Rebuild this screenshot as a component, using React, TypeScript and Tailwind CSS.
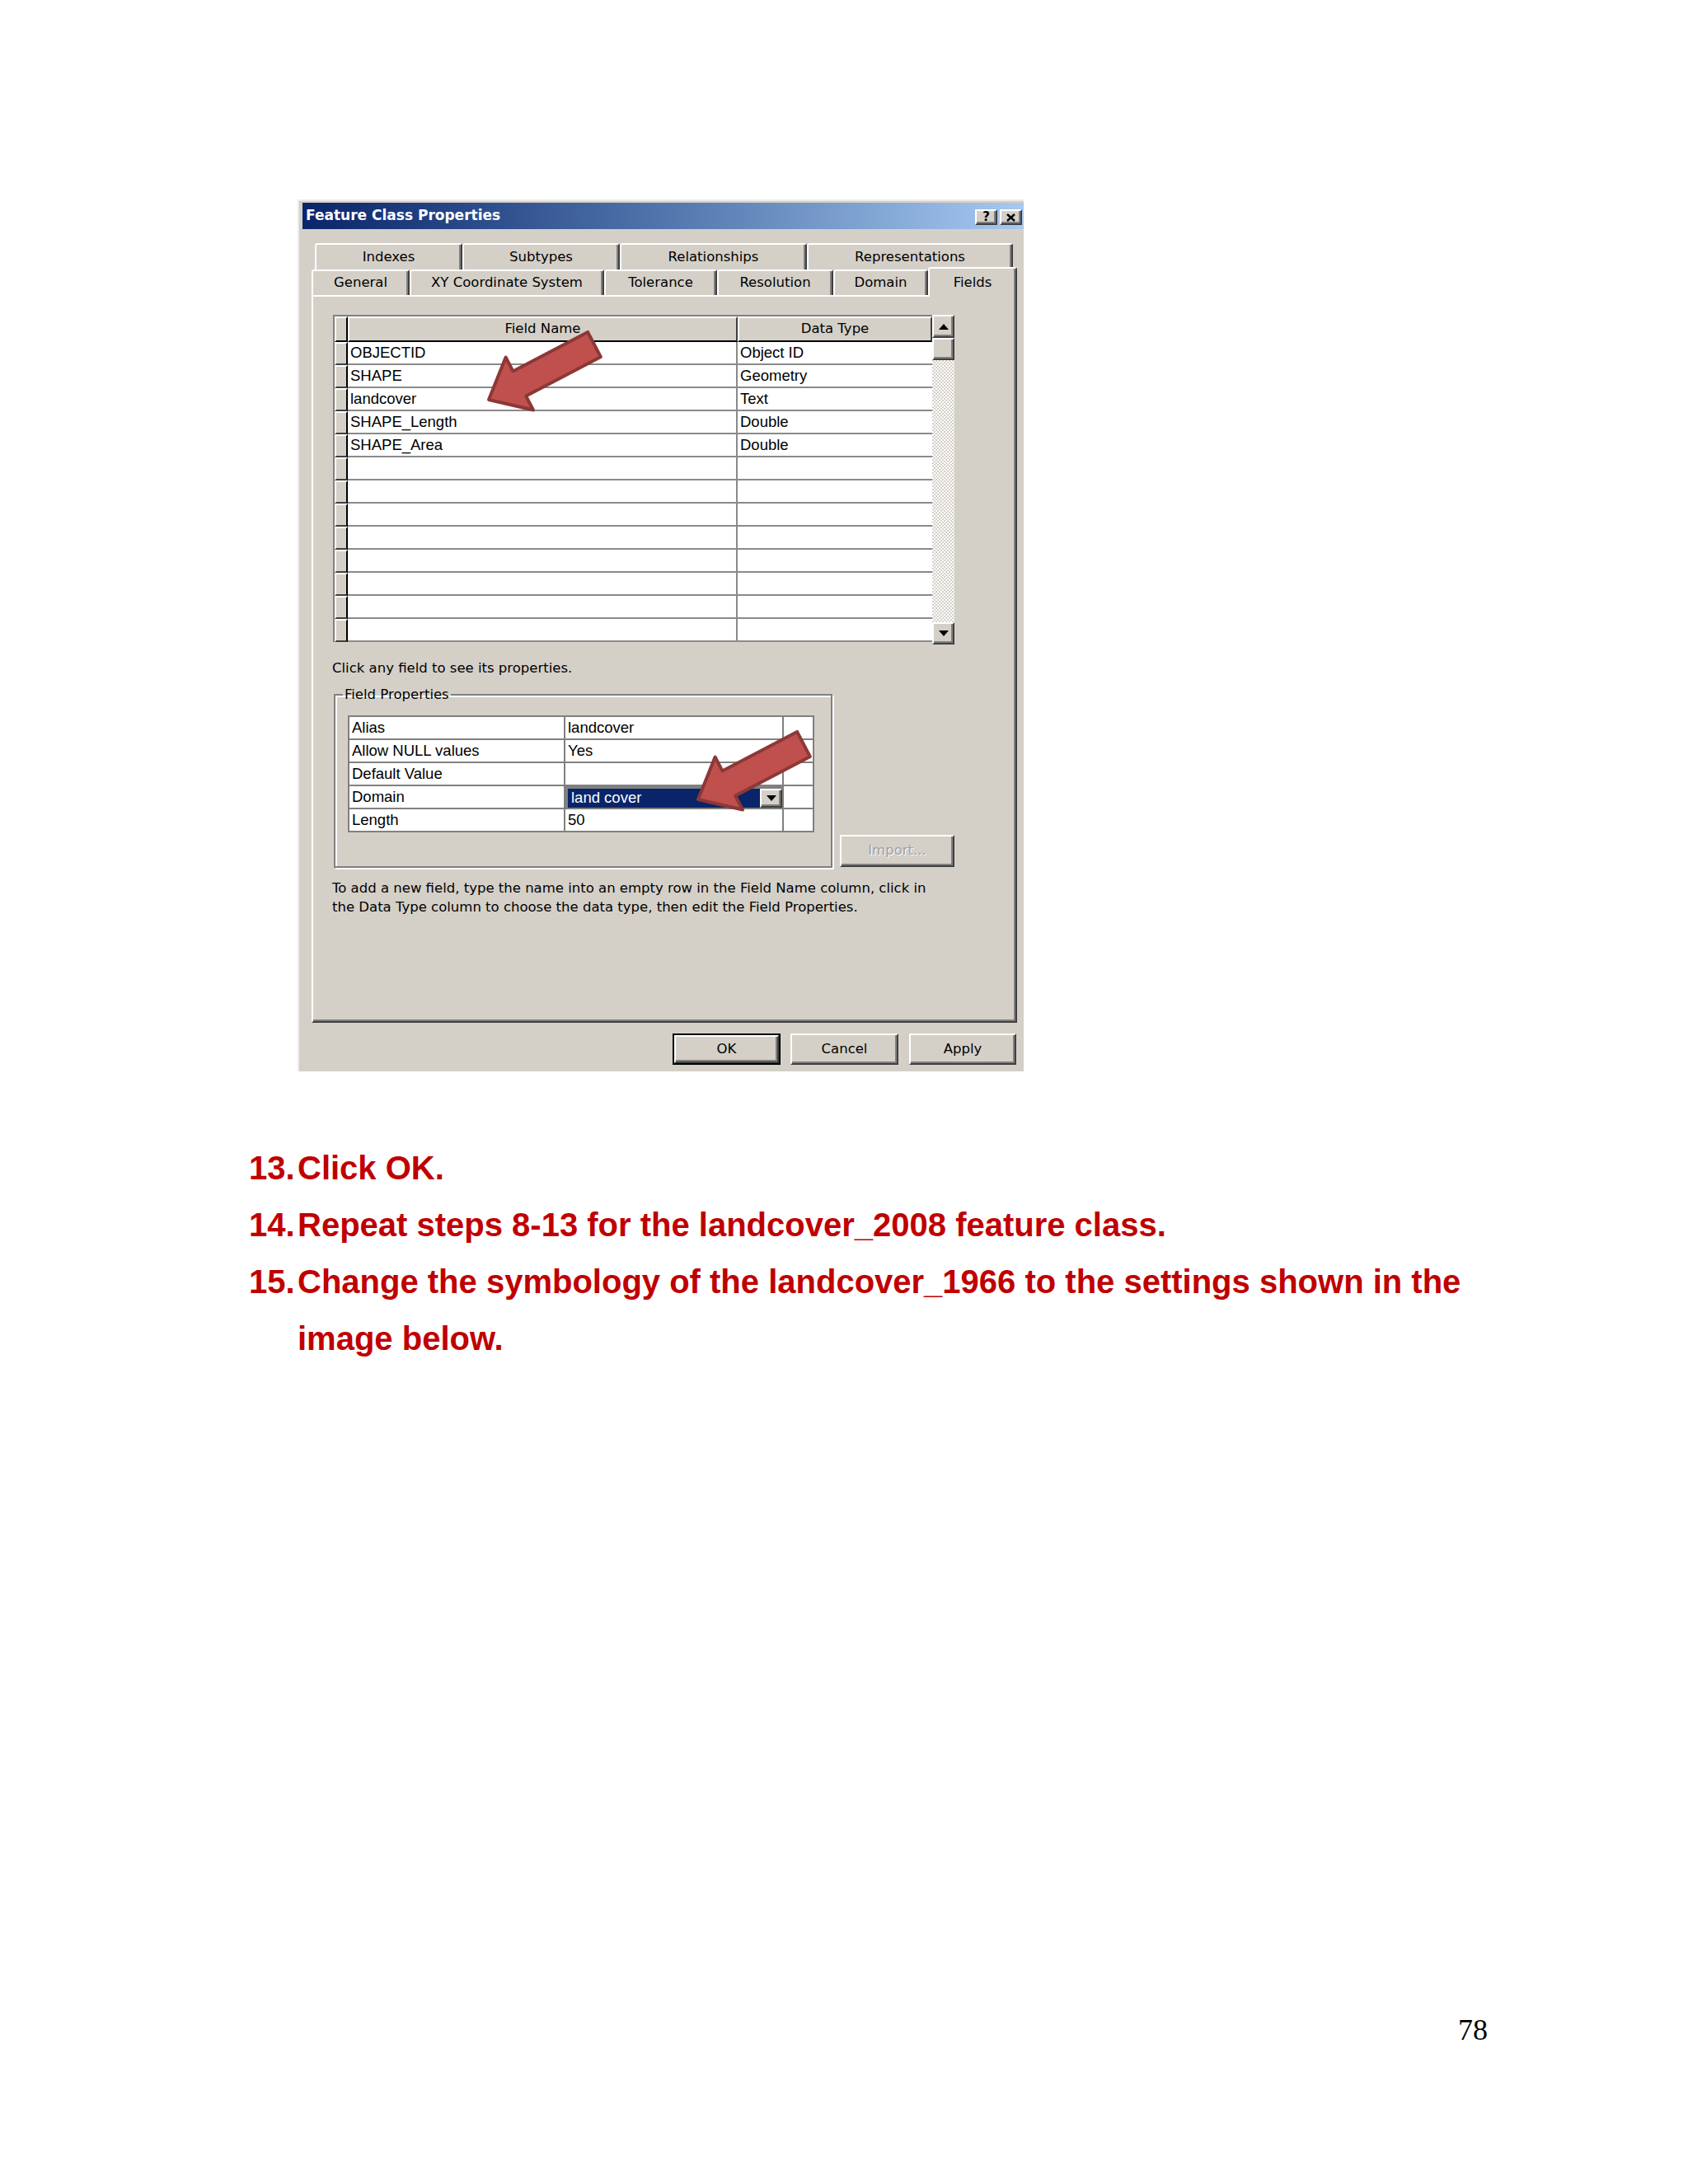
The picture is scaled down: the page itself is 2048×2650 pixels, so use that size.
import React from 'react';

const tahoma = "font-['DejaVu_Sans',sans-serif]";
const msSans = "font-['Liberation_Sans',Arial,sans-serif]";

const raised =
  'bg-[#d4d0c8] border-2 border-t-white border-l-white border-r-[#404040] border-b-[#404040] shadow-[inset_-2px_-2px_0_#808080]';

const fieldRows: [string, string][] = [
  ['OBJECTID', 'Object ID'],
  ['SHAPE', 'Geometry'],
  ['landcover', 'Text'],
  ['SHAPE_Length', 'Double'],
  ['SHAPE_Area', 'Double'],
  ['', ''],
  ['', ''],
  ['', ''],
  ['', ''],
  ['', ''],
  ['', ''],
  ['', ''],
  ['', ''],
];

const propRows = [
  ['Alias', 'landcover'],
  ['Allow NULL values', 'Yes'],
  ['Default Value', ''],
  ['Domain', 'land cover'],
  ['Length', '50'],
];

const Tri = ({ up }: { up?: boolean }) => (
  <svg width="12" height="7" viewBox="0 0 12 7">
    <polygon points={up ? '6,0 12,7 0,7' : '0,0 12,0 6,7'} fill="#000" />
  </svg>
);

const Tab = ({ label, w }: { label: string; w: number }) => (
  <div
    style={{ width: w }}
    className="h-full flex items-center justify-center rounded-t-[3px] bg-[#d4d0c8] border-l-2 border-t-2 border-white border-r-2 border-r-[#404040] shadow-[inset_-2px_0_0_#808080] text-[16.5px] text-black"
  >
    {label}
  </div>
);

const FieldGrid = () => (
  <div className="flex h-[400px] items-start">
    <div className="w-[727px] border-l-2 border-t-2 border-[#808080]">
      <div className="flex h-[31px]">
        <div className="w-[16px] bg-[#d4d0c8] border-l-2 border-t-2 border-white border-r-2 border-r-black border-b-2 border-b-black" />
        <div className="w-[473px] bg-[#d4d0c8] border-l-2 border-t-2 border-white border-r-2 border-r-[#404040] border-b-2 border-b-black flex items-center justify-center text-[16.5px]">
          Field Name
        </div>
        <div className="w-[236px] bg-[#d4d0c8] border-l-2 border-t-2 border-white border-r-2 border-r-[#404040] border-b-2 border-b-black flex items-center justify-center text-[16.5px]">
          Data Type
        </div>
      </div>
      {fieldRows.map(([name, type], i) => (
        <div key={i} className={`flex h-[28px] ${msSans} text-[18.5px]`}>
          <div className="w-[16px] bg-[#d4d0c8] border-l-2 border-t-2 border-white border-r-2 border-r-black border-b-2 border-b-[#404040]" />
          <div className="w-[473px] bg-white border-r-2 border-b-2 border-[#8a8a8a] pl-[3px] flex items-center leading-none">
            {name}
          </div>
          <div className="w-[236px] bg-white border-b-2 border-[#8a8a8a] pl-[3px] flex items-center leading-none">
            {type}
          </div>
        </div>
      ))}
    </div>
    <div className="w-[27px] h-[400px] flex flex-col">
      <div className={`${raised} h-[28px] flex items-center justify-center`}>
        <Tri up />
      </div>
      <div className={`${raised} h-[27px]`} />
      <div className="flex-1 bg-[image:repeating-conic-gradient(#ffffff_0%_25%,#d4d0c8_0%_50%)] bg-[length:4px_4px]" />
      <div className={`${raised} h-[27px] flex items-center justify-center`}>
        <Tri />
      </div>
    </div>
  </div>
);

const FieldProperties = () => (
  <div className="flex items-end mt-[12px]">
    <fieldset className="ml-[1px] w-[605px] h-[220px] border-2 border-[#808080] shadow-[inset_2px_2px_0_#ffffff,2px_2px_0_#ffffff] pl-[15px] pt-[15px]">
      <legend className="-ml-[6px] px-[2px] leading-[20px] text-[16.5px]">Field Properties</legend>
      <div className={`w-[566px] border-l-2 border-t-2 border-[#808080] bg-white ${msSans} text-[18.5px]`}>
        {propRows.map(([k, v]) => (
          <div key={k} className="flex h-[28px]">
            <div className="w-[262px] border-r-2 border-b-2 border-[#808080] pl-[3px] flex items-center leading-none">{k}</div>
            {k === 'Domain' ? (
              <div className="w-[265px] border-r-2 border-b-2 border-[#808080] flex">
                <div className="flex w-[263px] h-full border-l-[3px] border-t-[3px] border-[#808080]">
                  <div className="flex-1 bg-[#0a246a] text-white pl-[4px] flex items-center leading-none">{v}</div>
                  <div className={`${raised} w-[27px] flex items-center justify-center`}>
                    <Tri />
                  </div>
                </div>
              </div>
            ) : (
              <div className="w-[265px] border-r-2 border-b-2 border-[#808080] pl-[3px] flex items-center leading-none">{v}</div>
            )}
            <div className="w-[37px] border-r-2 border-b-2 border-[#808080]" />
          </div>
        ))}
      </div>
    </fieldset>
    <div className={`${raised} ml-[9px] mb-[1px] w-[139px] h-[39px] flex items-center justify-center text-[16.5px] text-[#a0a0a0] [text-shadow:1px_1px_0_#ffffff]`}>
      Import...
    </div>
  </div>
);

const Dialog = () => (
  <div
    className={`ml-[361px] w-[881px] h-[1058px] overflow-hidden bg-[#d4d0c8] border-l-2 border-t-2 border-[#ecebe6] pt-[2px] pl-[4px] ${tahoma} text-black`}
  >
    <div className="flex items-center h-[32px] w-full bg-linear-to-r from-[#0a246a] to-[#a6caf0] pl-[4px] pr-[2px]">
      <span className="font-bold text-[17px] text-white">Feature Class Properties</span>
      <div className="ml-auto flex gap-[3px] mt-[3px]">
        <div className={`${raised} w-[27px] h-[19px] flex items-center justify-center font-bold text-[15px] leading-none`}>?</div>
        <div className={`${raised} w-[27px] h-[19px] flex items-center justify-center`}>
          <svg width="11" height="10" viewBox="0 0 11 10">
            <path d="M1 1 L10 9 M10 1 L1 9" stroke="#000" strokeWidth="2.4" />
          </svg>
        </div>
      </div>
    </div>

    <div className="pl-[11px] pt-[17px]">
      <div className="flex h-[32px] pl-[4px]">
        <Tab label="Indexes" w={179} />
        <Tab label="Subtypes" w={191} />
        <Tab label="Relationships" w={227} />
        <Tab label="Representations" w={250} />
      </div>
      <div className="flex h-[31px] items-end">
        <Tab label="General" w={119} />
        <Tab label="XY Coordinate System" w={236} />
        <Tab label="Tolerance" w={137} />
        <Tab label="Resolution" w={141} />
        <Tab label="Domain" w={115} />
        <div className="relative z-10 w-[108px] h-[36px] -mb-[2px] flex items-center justify-center rounded-t-[3px] bg-[#d4d0c8] border-l-2 border-t-2 border-white border-r-2 border-r-[#404040] shadow-[inset_-2px_0_0_#808080] text-[16.5px]">
          Fields
        </div>
      </div>

      <div className="w-[856px] h-[883px] border-2 border-t-white border-l-white border-r-[#404040] border-b-[#404040] shadow-[inset_-2px_-2px_0_#808080] pl-[24px] pt-[22px]">
        <FieldGrid />
        <div className="mt-[19px] -ml-[1px] leading-[20px] text-[16.5px]">Click any field to see its properties.</div>
        <FieldProperties />
        <div className="mt-[13px] -ml-[1px] w-[800px] leading-[23px] text-[16.5px]">
          To add a new field, type the name into an empty row in the Field Name column, click in
          <br />
          the Data Type column to choose the data type, then edit the Field Properties.
        </div>
      </div>

      <div className="flex justify-end gap-[12px] w-[856px] pr-[1px] mt-[13px] text-[16.5px]">
        <div className="w-[131px] h-[38px] border-2 border-black">
          <div className={`${raised} w-full h-full flex items-center justify-center`}>OK</div>
        </div>
        <div className={`${raised} w-[131px] h-[38px] flex items-center justify-center`}>Cancel</div>
        <div className={`${raised} w-[130px] h-[38px] flex items-center justify-center ml-[1px]`}>Apply</div>
      </div>
    </div>
  </div>
);

const steps: [string, string][] = [
  ['13.', 'Click OK.'],
  ['14.', 'Repeat steps 8-13 for the landcover_2008 feature class.'],
  ['15.', 'Change the symbology of the landcover_1966 to the settings shown in the image below.'],
];

const Steps = () => (
  <div className={`mt-[83px] pl-[302px] text-[40px] leading-[69px] font-bold text-[#c00000] ${msSans}`}>
    {steps.map(([n, t]) => (
      <div key={n} className="flex">
        <span className="w-[59px] shrink-0">{n}</span>
        <span className="w-[1449px]">{t}</span>
      </div>
    ))}
  </div>
);

// block arrows drawn on top of the screenshot
const arrowPts = (dx: number, dy: number) =>
  [
    [593, 485],
    [647, 497.5],
    [638.2, 480.6],
    [728.9, 433.1],
    [713.1, 402.9],
    [622.4, 450.4],
    [613.6, 433.5],
  ]
    .map(([x, y]) => `${x + dx},${y + dy}`)
    .join(' ');

const Arrows = () => (
  <svg className="absolute left-0 top-0 pointer-events-none" width="2048" height="1400" viewBox="0 0 2048 1400">
    {[
      [0, 0],
      [254, 485],
    ].map(([dx, dy]) => (
      <polygon
        key={dx}
        points={arrowPts(dx, dy)}
        fill="#c0504d"
        stroke="#8c3836"
        strokeWidth="4"
        strokeLinejoin="round"
      />
    ))}
  </svg>
);

export default function App() {
  return (
    <div className="relative w-[2048px] h-[2650px] bg-white overflow-hidden">
      <div className="pt-[242px]">
        <Dialog />
      </div>
      <Steps />
      <div className="mt-[784px] w-[1805px] text-right text-[36px] leading-[40px] text-black font-['Liberation_Serif','Times_New_Roman',serif]">
        78
      </div>
      <Arrows />
    </div>
  );
}
